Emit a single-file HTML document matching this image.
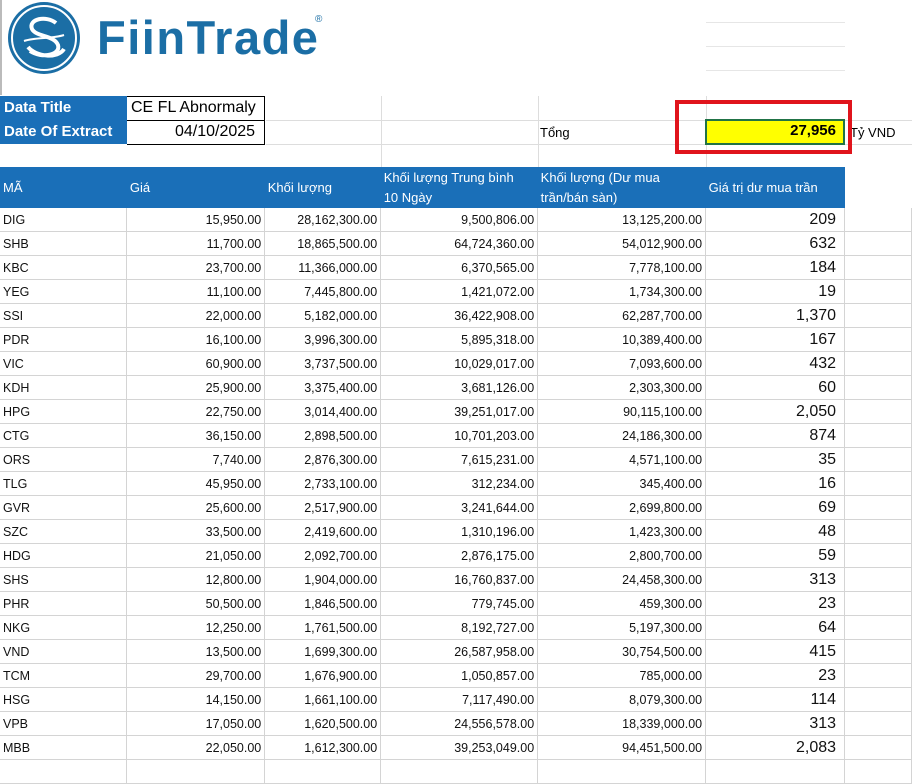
<!DOCTYPE html>
<html><head><meta charset="utf-8"><style>
body{margin:0;width:912px;height:768px;overflow:hidden;background:#fff;font-family:"Liberation Sans",sans-serif;position:relative}
.a{position:absolute}
table{position:absolute;left:0;top:167px;border-collapse:collapse;table-layout:fixed}
td{height:23px;border-right:1px solid #d4d4d4;border-bottom:1px solid #d4d4d4;font-size:12.5px;color:#111;padding:0 3px;white-space:nowrap;overflow:hidden}
td.r{text-align:right}
td.b{font-size:16px;text-align:right;padding-right:8px}
tr.h td{background:#1a6fb8;color:#fff;height:41px;font-size:13px;line-height:20px;border-right:none;border-bottom:none}
</style></head><body>
<div class="a" style="left:0;top:0;width:2px;height:95px;background:#bbb"></div>
<svg class="a" style="left:6px;top:1px" width="80" height="76">
<circle cx="38" cy="37" r="36" fill="#1b6ea5"/><circle cx="38" cy="37" r="32" fill="none" stroke="#fff" stroke-width="2"/>
<path d="M50 22 C40 14 22 18 26 28 C30 36 48 34 52 44 C55 54 36 58 24 50 M22 46 C30 56 52 58 58 48" fill="none" stroke="#fff" stroke-width="4"/>
<path d="M18 40 C30 36 46 38 58 34" fill="none" stroke="#fff" stroke-width="2"/>
</svg>
<div class="a" style="left:97px;top:10px;font-size:47px;font-weight:bold;color:#1b6ea5;letter-spacing:1.5px">FiinTrade</div>
<div class="a" style="left:315px;top:14px;font-size:10px;color:#1b6ea5">®</div>
<div class="a" style="left:381px;top:96px;width:1px;height:71px;background:#ddd"></div>
<div class="a" style="left:538px;top:96px;width:1px;height:71px;background:#ddd"></div>
<div class="a" style="left:706px;top:96px;width:1px;height:71px;background:#ddd"></div>
<div class="a" style="left:266px;top:120px;width:646px;height:1px;background:#ddd"></div>
<div class="a" style="left:266px;top:144px;width:646px;height:1px;background:#ddd"></div>
<div class="a" style="left:706px;top:22px;width:139px;height:1px;background:#e6e6e6"></div>
<div class="a" style="left:706px;top:46px;width:139px;height:1px;background:#e6e6e6"></div>
<div class="a" style="left:706px;top:70px;width:139px;height:1px;background:#e6e6e6"></div>
<div class="a" style="left:0;top:96px;width:127px;height:48px;background:#1a6fb8"></div>
<div class="a" style="left:4px;top:99px;color:#fff;font-weight:bold;font-size:15px">Data Title</div>
<div class="a" style="left:4px;top:123px;color:#fff;font-weight:bold;font-size:15px">Date Of Extract</div>
<div class="a" style="left:127px;top:96px;width:137px;height:47px;border:1px solid #000;border-left:none"></div>
<div class="a" style="left:127px;top:120px;width:138px;height:1px;background:#000"></div>
<div class="a" style="left:131px;top:99px;font-size:16px">CE FL Abnormaly</div>
<div class="a" style="left:175px;top:123px;font-size:16px">04/10/2025</div>
<div class="a" style="left:540px;top:125px;font-size:13px">Tổng</div>
<div class="a" style="left:705px;top:119px;width:136px;height:22px;background:#ffff00;border:2px solid #217346"></div>
<div class="a" style="left:705px;top:122px;width:131px;text-align:right;font-size:15px;font-weight:bold">27,956</div>
<div class="a" style="left:850px;top:125px;font-size:13px">Tỷ VND</div>
<div class="a" style="left:675px;top:100px;width:169px;height:46px;border:4px solid #e0141c"></div>
<table>
<colgroup><col style="width:127px"><col style="width:138px"><col style="width:116px"><col style="width:157px"><col style="width:168px"><col style="width:139px"><col style="width:67px"></colgroup>
<tr class="h"><td>MÃ</td><td>Giá</td><td>Khối lượng</td><td>Khối lượng Trung bình<br>10 Ngày</td><td>Khối lượng (Dư mua<br>trần/bán sàn)</td><td>Giá trị dư mua trần</td><td style="background:#fff"></td></tr>
<tr><td>DIG</td><td class="r">15,950.00</td><td class="r">28,162,300.00</td><td class="r">9,500,806.00</td><td class="r">13,125,200.00</td><td class="b">209</td><td></td></tr>
<tr><td>SHB</td><td class="r">11,700.00</td><td class="r">18,865,500.00</td><td class="r">64,724,360.00</td><td class="r">54,012,900.00</td><td class="b">632</td><td></td></tr>
<tr><td>KBC</td><td class="r">23,700.00</td><td class="r">11,366,000.00</td><td class="r">6,370,565.00</td><td class="r">7,778,100.00</td><td class="b">184</td><td></td></tr>
<tr><td>YEG</td><td class="r">11,100.00</td><td class="r">7,445,800.00</td><td class="r">1,421,072.00</td><td class="r">1,734,300.00</td><td class="b">19</td><td></td></tr>
<tr><td>SSI</td><td class="r">22,000.00</td><td class="r">5,182,000.00</td><td class="r">36,422,908.00</td><td class="r">62,287,700.00</td><td class="b">1,370</td><td></td></tr>
<tr><td>PDR</td><td class="r">16,100.00</td><td class="r">3,996,300.00</td><td class="r">5,895,318.00</td><td class="r">10,389,400.00</td><td class="b">167</td><td></td></tr>
<tr><td>VIC</td><td class="r">60,900.00</td><td class="r">3,737,500.00</td><td class="r">10,029,017.00</td><td class="r">7,093,600.00</td><td class="b">432</td><td></td></tr>
<tr><td>KDH</td><td class="r">25,900.00</td><td class="r">3,375,400.00</td><td class="r">3,681,126.00</td><td class="r">2,303,300.00</td><td class="b">60</td><td></td></tr>
<tr><td>HPG</td><td class="r">22,750.00</td><td class="r">3,014,400.00</td><td class="r">39,251,017.00</td><td class="r">90,115,100.00</td><td class="b">2,050</td><td></td></tr>
<tr><td>CTG</td><td class="r">36,150.00</td><td class="r">2,898,500.00</td><td class="r">10,701,203.00</td><td class="r">24,186,300.00</td><td class="b">874</td><td></td></tr>
<tr><td>ORS</td><td class="r">7,740.00</td><td class="r">2,876,300.00</td><td class="r">7,615,231.00</td><td class="r">4,571,100.00</td><td class="b">35</td><td></td></tr>
<tr><td>TLG</td><td class="r">45,950.00</td><td class="r">2,733,100.00</td><td class="r">312,234.00</td><td class="r">345,400.00</td><td class="b">16</td><td></td></tr>
<tr><td>GVR</td><td class="r">25,600.00</td><td class="r">2,517,900.00</td><td class="r">3,241,644.00</td><td class="r">2,699,800.00</td><td class="b">69</td><td></td></tr>
<tr><td>SZC</td><td class="r">33,500.00</td><td class="r">2,419,600.00</td><td class="r">1,310,196.00</td><td class="r">1,423,300.00</td><td class="b">48</td><td></td></tr>
<tr><td>HDG</td><td class="r">21,050.00</td><td class="r">2,092,700.00</td><td class="r">2,876,175.00</td><td class="r">2,800,700.00</td><td class="b">59</td><td></td></tr>
<tr><td>SHS</td><td class="r">12,800.00</td><td class="r">1,904,000.00</td><td class="r">16,760,837.00</td><td class="r">24,458,300.00</td><td class="b">313</td><td></td></tr>
<tr><td>PHR</td><td class="r">50,500.00</td><td class="r">1,846,500.00</td><td class="r">779,745.00</td><td class="r">459,300.00</td><td class="b">23</td><td></td></tr>
<tr><td>NKG</td><td class="r">12,250.00</td><td class="r">1,761,500.00</td><td class="r">8,192,727.00</td><td class="r">5,197,300.00</td><td class="b">64</td><td></td></tr>
<tr><td>VND</td><td class="r">13,500.00</td><td class="r">1,699,300.00</td><td class="r">26,587,958.00</td><td class="r">30,754,500.00</td><td class="b">415</td><td></td></tr>
<tr><td>TCM</td><td class="r">29,700.00</td><td class="r">1,676,900.00</td><td class="r">1,050,857.00</td><td class="r">785,000.00</td><td class="b">23</td><td></td></tr>
<tr><td>HSG</td><td class="r">14,150.00</td><td class="r">1,661,100.00</td><td class="r">7,117,490.00</td><td class="r">8,079,300.00</td><td class="b">114</td><td></td></tr>
<tr><td>VPB</td><td class="r">17,050.00</td><td class="r">1,620,500.00</td><td class="r">24,556,578.00</td><td class="r">18,339,000.00</td><td class="b">313</td><td></td></tr>
<tr><td>MBB</td><td class="r">22,050.00</td><td class="r">1,612,300.00</td><td class="r">39,253,049.00</td><td class="r">94,451,500.00</td><td class="b">2,083</td><td></td></tr>
<tr><td></td><td></td><td></td><td></td><td></td><td></td><td></td></tr>
</table>
</body></html>
